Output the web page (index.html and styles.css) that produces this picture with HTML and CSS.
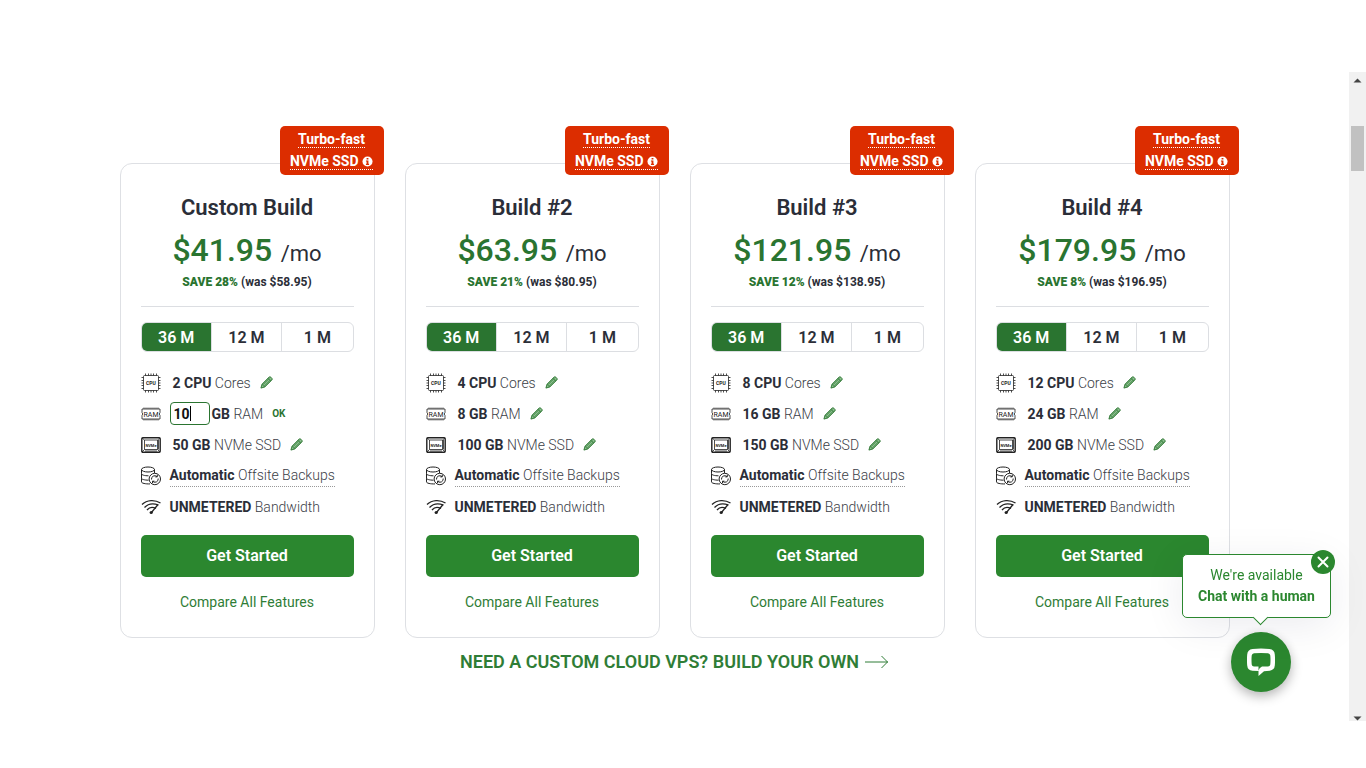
FILE: index.html
```html
<!DOCTYPE html>
<html lang="en">
<head>
    <meta charset="UTF-8">
    <meta name="viewport" content="width=device-width, initial-scale=1.0">
    <title>Cloud VPS Plans</title>
    <link rel="stylesheet" href="styles.css">
</head>
<body>
    <!-- Icons shared by all cards -->
    <svg class="sprite" aria-hidden="true">
        <symbol id="cpu" viewBox="0 0 20 20">
            <rect x="2.5" y="2.5" width="15" height="15" rx="1" fill="none" stroke="currentColor" stroke-width=".8"/>
            <path d="M4.500 .5v2M7.500 .5v2M10 .5v2M12.500 .5v2M15.500 .5v2M4.500 17.500v2M7.500 17.500v2M10 17.500v2M12.500 17.500v2M15.500 17.500v2M.5 4.500h2M.5 7.500h2M.5 10h2M.5 12.500h2M.5 15.500h2M17.500 4.500h2M17.500 7.500h2M17.500 10h2M17.500 12.500h2M17.500 15.500h2" stroke="currentColor" stroke-width=".8"/>
            <text x="10" y="12" text-anchor="middle" font-size="5" font-weight="700" fill="currentColor">CPU</text>
        </symbol>
        <symbol id="ram" viewBox="0 0 20 20">
            <path d="M1 5h18v3.500q-1.500 1.500 0 3V15H1v-3.500q1.500-1.500 0-3z" fill="none" stroke="currentColor" stroke-width=".8"/>
            <path d="M3 3.500V5M5 3.500V5M7 3.500V5M9 3.500V5M11 3.500V5M13 3.500V5M15 3.500V5M17 3.500V5M3 15v1.500M5 15v1.500M7 15v1.500M9 15v1.500M11 15v1.500M13 15v1.500M15 15v1.500M17 15v1.500" stroke="currentColor" stroke-width=".8"/>
            <text x="10" y="12.500" text-anchor="middle" font-size="7" font-weight="400" fill="currentColor">RAM</text>
        </symbol>
        <symbol id="ssd" viewBox="0 0 20 20">
            <rect x=".8" y="2.800" width="18.400" height="14.400" rx="1" fill="none" stroke="currentColor" stroke-width="1.400"/>
            <path d="M3.500 5h13v9.500h-13zM1 3l2.500 2M19 3l-2.500 2M1 17l2.500-2.500M19 17l-2.500-2.500" fill="none" stroke="currentColor" stroke-width=".8"/>
            <path d="M17.500 5v9.500M4 16h12" stroke="currentColor" stroke-width=".8"/>
            <text x="10" y="11.500" text-anchor="middle" font-size="4" font-weight="700" fill="currentColor">NVMe</text>
        </symbol>
        <symbol id="backup" viewBox="0 0 20 20">
            <g fill="none" stroke="currentColor" stroke-width="1">
                <ellipse cx="7" cy="3.500" rx="6.500" ry="2.500"/>
                <path d="M.5 3.500v4.200c0 1.200 3 2.100 7 2.100M13.500 3.500v3.500M.5 7.700v4.600c0 1 3 1.800 7 1.900M.5 12.300v3.600c0 1.300 4 2.200 8.500 2"/>
                <circle cx="13.800" cy="13" r="5.700"/>
                <path d="M10.500 13.500a3.300 3.300 0 0 1 5.500-2.900M17.200 12.500a3.300 3.300 0 0 1-5.500 2.900"/>
                <path d="M16.300 8.900v2h-2M11.500 17.200v-2h2"/>
            </g>
        </symbol>
        <symbol id="wifi" viewBox="0 0 20 20">
            <g fill="none" stroke="currentColor" stroke-width="1.300">
                <path d="M1 7.500c5-5 13-5 18.500-1.500"/>
                <path d="M3.500 10.500c4-4.300 10-4 14-2.500"/>
                <path d="M6 13c2.500-3 6-3 9-1.500"/>
                <path d="M10.500 15.500L17 7.500"/>
            </g>
            <circle cx="10.200" cy="15.500" r="1.600" fill="currentColor"/>
        </symbol>
        <symbol id="pencil" viewBox="0 0 14 14">
            <path d="M1 13l1.200-4.200L9.800 1.200q1-.8 2 .2l.9.900q1 1 .1 2L5.200 11.800z" fill="#8cc08e" stroke="#2a7430"/>
            <path d="M3 9.500L10 2.500M4.500 11L11.500 4M8.700 2.500l2.800 2.800M2.200 9l2.800 2.800" fill="none" stroke="#2a7430" stroke-width=".8"/>
        </symbol>
        <symbol id="info" viewBox="0 0 12 12">
            <circle cx="6" cy="6" r="5.500" fill="#fff"/>
            <path d="M5 2.300h2v1.500H5zM4.300 4.900H7v3.600h.7v1.200H4.300V8.500H5V6h-.7z" fill="#dc2d00"/>
        </symbol>
    </svg>

    <div class="page">
        <main class="content">
            <div class="plans">
                <section class="card">
                    <a class="badge" href="#"><span>Turbo-fast</span><br><span>NVMe SSD <svg class="info"><use href="#info"/></svg></span></a>
                    <h2>Custom Build</h2>
                    <p class="price"><b>$41.95</b> /mo</p>
                    <p class="save"><b>SAVE 28%</b> (was $58.95)</p>
                    <hr>
                    <div class="terms">
                        <button type="button" class="active">36 M</button>
                        <button type="button">12 M</button>
                        <button type="button">1 M</button>
                    </div>
                    <ul class="specs">
                        <li><svg class="icon"><use href="#cpu"/></svg><span class="value"><b>2 CPU</b> Cores</span><button type="button" class="edit" aria-label="Edit CPU"><svg><use href="#pencil"/></svg></button></li>
                        <li>
                            <svg class="icon"><use href="#ram"/></svg>
                            <span class="ram-box"><input type="text" id="ram-size" value="10"><span class="caret"></span></span>
                            <label for="ram-size"><b>GB</b> RAM</label>
                            <button type="button" class="ok">OK</button>
                        </li>
                        <li><svg class="icon"><use href="#ssd"/></svg><span class="value"><b>50 GB</b> NVMe SSD</span><button type="button" class="edit" aria-label="Edit SSD"><svg><use href="#pencil"/></svg></button></li>
                        <li><svg class="icon"><use href="#backup"/></svg><span class="hint"><b>Automatic</b> Offsite Backups</span></li>
                        <li><svg class="icon"><use href="#wifi"/></svg><span><b>UNMETERED</b> Bandwidth</span></li>
                    </ul>
                    <a class="start" href="#">Get Started</a>
                    <a class="compare" href="#">Compare All Features</a>
                </section>

                <section class="card">
                    <a class="badge" href="#"><span>Turbo-fast</span><br><span>NVMe SSD <svg class="info"><use href="#info"/></svg></span></a>
                    <h2>Build #2</h2>
                    <p class="price"><b>$63.95</b> /mo</p>
                    <p class="save"><b>SAVE 21%</b> (was $80.95)</p>
                    <hr>
                    <div class="terms">
                        <button type="button" class="active">36 M</button>
                        <button type="button">12 M</button>
                        <button type="button">1 M</button>
                    </div>
                    <ul class="specs">
                        <li><svg class="icon"><use href="#cpu"/></svg><span class="value"><b>4 CPU</b> Cores</span><button type="button" class="edit" aria-label="Edit CPU"><svg><use href="#pencil"/></svg></button></li>
                        <li><svg class="icon"><use href="#ram"/></svg><span class="value"><b>8 GB</b> RAM</span><button type="button" class="edit" aria-label="Edit RAM"><svg><use href="#pencil"/></svg></button></li>
                        <li><svg class="icon"><use href="#ssd"/></svg><span class="value"><b>100 GB</b> NVMe SSD</span><button type="button" class="edit" aria-label="Edit SSD"><svg><use href="#pencil"/></svg></button></li>
                        <li><svg class="icon"><use href="#backup"/></svg><span class="hint"><b>Automatic</b> Offsite Backups</span></li>
                        <li><svg class="icon"><use href="#wifi"/></svg><span><b>UNMETERED</b> Bandwidth</span></li>
                    </ul>
                    <a class="start" href="#">Get Started</a>
                    <a class="compare" href="#">Compare All Features</a>
                </section>

                <section class="card">
                    <a class="badge" href="#"><span>Turbo-fast</span><br><span>NVMe SSD <svg class="info"><use href="#info"/></svg></span></a>
                    <h2>Build #3</h2>
                    <p class="price"><b>$121.95</b> /mo</p>
                    <p class="save"><b>SAVE 12%</b> (was $138.95)</p>
                    <hr>
                    <div class="terms">
                        <button type="button" class="active">36 M</button>
                        <button type="button">12 M</button>
                        <button type="button">1 M</button>
                    </div>
                    <ul class="specs">
                        <li><svg class="icon"><use href="#cpu"/></svg><span class="value"><b>8 CPU</b> Cores</span><button type="button" class="edit" aria-label="Edit CPU"><svg><use href="#pencil"/></svg></button></li>
                        <li><svg class="icon"><use href="#ram"/></svg><span class="value"><b>16 GB</b> RAM</span><button type="button" class="edit" aria-label="Edit RAM"><svg><use href="#pencil"/></svg></button></li>
                        <li><svg class="icon"><use href="#ssd"/></svg><span class="value"><b>150 GB</b> NVMe SSD</span><button type="button" class="edit" aria-label="Edit SSD"><svg><use href="#pencil"/></svg></button></li>
                        <li><svg class="icon"><use href="#backup"/></svg><span class="hint"><b>Automatic</b> Offsite Backups</span></li>
                        <li><svg class="icon"><use href="#wifi"/></svg><span><b>UNMETERED</b> Bandwidth</span></li>
                    </ul>
                    <a class="start" href="#">Get Started</a>
                    <a class="compare" href="#">Compare All Features</a>
                </section>

                <section class="card">
                    <a class="badge" href="#"><span>Turbo-fast</span><br><span>NVMe SSD <svg class="info"><use href="#info"/></svg></span></a>
                    <h2>Build #4</h2>
                    <p class="price"><b>$179.95</b> /mo</p>
                    <p class="save"><b>SAVE 8%</b> (was $196.95)</p>
                    <hr>
                    <div class="terms">
                        <button type="button" class="active">36 M</button>
                        <button type="button">12 M</button>
                        <button type="button">1 M</button>
                    </div>
                    <ul class="specs">
                        <li><svg class="icon"><use href="#cpu"/></svg><span class="value"><b>12 CPU</b> Cores</span><button type="button" class="edit" aria-label="Edit CPU"><svg><use href="#pencil"/></svg></button></li>
                        <li><svg class="icon"><use href="#ram"/></svg><span class="value"><b>24 GB</b> RAM</span><button type="button" class="edit" aria-label="Edit RAM"><svg><use href="#pencil"/></svg></button></li>
                        <li><svg class="icon"><use href="#ssd"/></svg><span class="value"><b>200 GB</b> NVMe SSD</span><button type="button" class="edit" aria-label="Edit SSD"><svg><use href="#pencil"/></svg></button></li>
                        <li><svg class="icon"><use href="#backup"/></svg><span class="hint"><b>Automatic</b> Offsite Backups</span></li>
                        <li><svg class="icon"><use href="#wifi"/></svg><span><b>UNMETERED</b> Bandwidth</span></li>
                    </ul>
                    <a class="start" href="#">Get Started</a>
                    <a class="compare" href="#">Compare All Features</a>
                </section>
            </div>

            <a class="custom-link" href="#">NEED A CUSTOM CLOUD VPS? BUILD YOUR OWN
                <svg viewBox="0 0 24 14"><path d="M0 7h23M16.500 1l6 6-6 6" fill="none" stroke="currentColor"/></svg>
            </a>
        </main>

        <div class="scrollbar">
            <svg viewBox="0 0 9 5"><path d="M.5 4.500L4.500 .5l4 4z"/></svg>
            <div class="track"><div class="thumb"></div></div>
            <svg viewBox="0 0 9 5"><path d="M.5 .5l4 4 4-4z"/></svg>
        </div>
    </div>

    <div class="chat">
        <div class="bubble">
            <p>We're available</p>
            <p><b>Chat with a human</b></p>
            <button type="button" class="close" aria-label="Close">
                <svg viewBox="0 0 12 12"><path d="M1.500 1.500l9 9M10.500 1.500l-9 9" stroke="#fff" stroke-width="2" stroke-linecap="round"/></svg>
            </button>
        </div>
        <button type="button" class="chat-button" aria-label="Open chat">
            <svg viewBox="0 0 28 28"><path fill-rule="evenodd" fill="#fff" d="M5.500 1Q14-.2 22.500 1q5 .7 5.300 5.500.5 5.500 0 11-.4 4.500-5 5.200L17 23.200 11.500 28v-4.900L5.500 22.700q-4.900-.5-5.300-5.200-.5-5.500 0-11Q.6 1.600 5.500 1zM7 5.300q-2 .2-2.300 2.200-.4 4.500 0 9Q5 18.300 7 18.500h4.500v4.300Q12 20 15 18.500h6q2-.2 2.300-2 .4-4.500 0-9Q23 5.500 21 5.300 14 4.600 7 5.300z"/></svg>
        </button>
    </div>
</body>
</html>
```
FILE: styles.css
```css
* {
    box-sizing: border-box;
}

body {
    margin: 0;
    font-family: Roboto, sans-serif;
    font-size: 14px;
    color: #2b2e38;
    background-color: #fff;
}

a {
    text-decoration: none;
}

button {
    font-family: inherit;
    background: none;
    border: none;
    padding: 0;
    cursor: pointer;
}

h2,
p,
ul {
    margin: 0;
    padding: 0;
}

.sprite {
    display: none;
}

.page {
    display: flex;
    min-height: 100vh;
    padding: 72px 0 47px;
}

.content {
    flex: 1;
    display: flex;
    flex-direction: column;
    align-items: center;
    gap: 12px;
    padding: 91px 20px 0;
}

.plans {
    display: grid;
    grid-template-columns: repeat(4, 1fr);
    gap: 30px;
    width: 100%;
    max-width: 1110px;
}

.card {
    position: relative;
    padding: 30px 20px 24px;
    border: 1px solid #dee0e4;
    border-radius: 12px;
    text-align: center;
}

.badge {
    position: absolute;
    top: -38px;
    right: -10px;
    width: 104px;
    height: 49px;
    padding-top: 2px;
    border-radius: 5px;
    background-color: #dc2d00;
    color: #fff;
    font-size: 14px;
    font-weight: 700;
    line-height: 22px;
}

.badge span {
    border-bottom: 1px dotted #fff;
}

.info {
    width: 11px;
    height: 11px;
    vertical-align: -1px;
}

h2 {
    font-size: 22px;
    font-weight: 600;
    line-height: 28px;
}

.price {
    margin-top: 12px;
    font-size: 22px;
    font-weight: 400;
    line-height: 38px;
}

.price b {
    margin-right: 3px;
    font-size: 32px;
    font-weight: 500;
    line-height: 32px;
    color: #2a7430;
}

.save {
    font-size: 12px;
    font-weight: 700;
    line-height: 18px;
}

.save b {
    color: #2a7430;
}

hr {
    margin: 15px 0;
    border: none;
    border-top: 1px solid #dcdee2;
}

.terms {
    display: grid;
    grid-template-columns: repeat(3, 1fr);
    height: 30px;
    border: 1px solid #dcdee2;
    border-radius: 6px;
    overflow: hidden;
}

.terms button {
    border-right: 1px solid #dcdee2;
    font-size: 16px;
    font-weight: 600;
    color: #2b2e38;
}

.terms button:last-child {
    border-right: none;
}

.terms .active {
    background-color: #2a7430;
    color: #fff;
}

.specs {
    margin: 15px 0 13px;
    list-style: none;
}

.specs li {
    display: flex;
    align-items: center;
    height: 31px;
    color: #3b3e47;
    font-weight: 300;
    white-space: nowrap;
}

.specs b {
    font-weight: 700;
    color: #2b2e38;
}

.icon {
    flex: none;
    width: 20px;
    height: 20px;
    margin-right: 9px;
    color: #222;
}

.value {
    padding-left: 3px;
}

.hint {
    border-bottom: 1px dotted #999;
    line-height: 22px;
}

.edit {
    display: flex;
    margin-left: 9px;
}

.edit svg {
    width: 13px;
    height: 13px;
}

.ram-box {
    position: relative;
    margin-right: 2px;
}

.ram-box input {
    display: block;
    width: 40px;
    height: 23px;
    padding: 0 3px;
    border: 1px solid #2a7430;
    border-radius: 4px;
    outline: none;
    font-family: inherit;
    font-size: 14px;
    font-weight: 700;
    color: #111;
}

.caret {
    position: absolute;
    top: 4px;
    left: 20px;
    width: 1px;
    height: 15px;
    background-color: #000;
}

.ok {
    margin-left: 9px;
    font-size: 10px;
    font-weight: 700;
    color: #2a7430;
}

.start {
    display: block;
    border-radius: 5px;
    background-color: #2b872f;
    color: #fff;
    font-size: 16px;
    font-weight: 600;
    line-height: 42px;
}

.compare {
    display: block;
    margin-top: 14px;
    color: #2f7d36;
    line-height: 22px;
}

.custom-link {
    display: flex;
    align-items: center;
    gap: 6px;
    color: #2f7d36;
    font-size: 18px;
    font-weight: 600;
    line-height: 24px;
}

.custom-link svg {
    width: 24px;
    height: 14px;
}

.scrollbar {
    display: flex;
    flex-direction: column;
    align-items: center;
    width: 17px;
    padding: 6px 0 0;
    background-color: #f1f1f1;
}

.scrollbar svg {
    width: 9px;
    height: 5px;
    fill: #444;
}

.track {
    flex: 1;
    padding-top: 43px;
}

.thumb {
    width: 13px;
    height: 45px;
    background-color: #c1c1c1;
}

/* Chat widget */
.chat {
    position: fixed;
    right: 35px;
    bottom: 76px;
    display: flex;
    flex-direction: column;
    align-items: center;
    gap: 14px;
}

.bubble {
    position: relative;
    width: 149px;
    height: 64px;
    padding-top: 10px;
    border: 1px solid #2b872f;
    border-radius: 5px;
    background-color: #fff;
    box-shadow: 0 8px 40px rgba(0, 0, 60, 0.08);
    color: #2b872f;
    line-height: 21px;
    text-align: center;
}

.bubble::after {
    content: "";
    position: absolute;
    bottom: -6px;
    left: 72px;
    width: 10px;
    height: 10px;
    border: solid #2b872f;
    border-width: 0 1px 1px 0;
    background-color: #fff;
    transform: rotate(45deg);
}

.close {
    position: absolute;
    top: -5px;
    right: -5px;
    display: flex;
    align-items: center;
    justify-content: center;
    width: 24px;
    height: 24px;
    border-radius: 50%;
    background-color: #2b872f;
}

.close svg {
    width: 12px;
    height: 12px;
}

.chat-button {
    display: flex;
    align-items: center;
    justify-content: center;
    width: 60px;
    height: 60px;
    margin-left: 8px;
    border-radius: 50%;
    background-color: #2b872f;
    box-shadow: 0 4px 12px rgba(0, 0, 0, 0.3);
}

.chat-button svg {
    width: 28px;
    height: 28px;
}
```
